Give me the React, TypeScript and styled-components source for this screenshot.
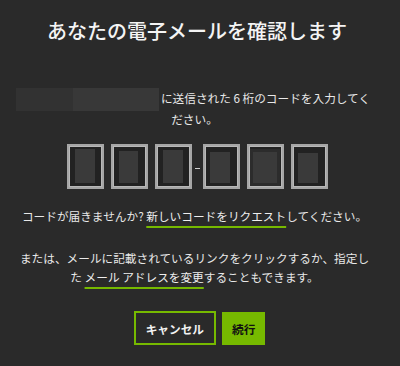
import React from "react";
import styled, { createGlobalStyle } from "styled-components";

const GlobalStyle = createGlobalStyle`
  html, body {
    margin: 0;
    padding: 0;
    background: #2a2a2a;
  }
  body {
    font-family: "Noto Sans CJK JP", "Noto Sans", sans-serif;
    color: #eeeeee;
  }
`;

const Dialog = styled.div`
  width: 400px;
  height: 366px;
  box-sizing: border-box;
  padding-top: 19px;
  display: flex;
  flex-direction: column;
  align-items: center;
`;

const Title = styled.h1`
  margin: 0;
  font-size: 20px;
  line-height: 24px;
  font-weight: 500;
  color: #f4f4f4;
  text-align: center;
  transform: translateX(-3px);
`;

const Content = styled.div`
  width: 356px;
  margin-left: -11px;
  display: flex;
  flex-direction: column;
  align-items: center;
`;

const Paragraph = styled.p<{ $top: number; $lh?: number }>`
  margin: ${(p) => p.$top}px 0 0;
  font-size: 11.67px;
  line-height: ${(p) => p.$lh ?? 20}px;
  text-align: center;
  color: #e8e8e8;
`;

const Redacted = styled.span`
  display: inline-flex;
  vertical-align: middle;
  height: 23px;
  margin: -2px 2px -2px -3px;
`;

const RedactedPart = styled.span<{ $w: number; $shade: string }>`
  display: block;
  width: ${(p) => p.$w}px;
  height: 100%;
  background: ${(p) => p.$shade};
`;

const CodeRow = styled.div`
  margin-top: 15px;
  display: flex;
  align-items: center;
  transform: translateX(3px);
`;

const CodeGroup = styled.div`
  display: flex;
  gap: 7px;
`;

const CodeBox = styled.div`
  width: 37px;
  height: 45px;
  box-sizing: border-box;
  border: 2px solid #a6a6a6;
  box-shadow: inset 0 0 0 1px #b8b8b8;
  background: #222222;
  position: relative;
`;

const Digit = styled.span<{ $l: number; $t: number; $w: number; $frame?: boolean }>`
  position: absolute;
  left: ${(p) => p.$l}px;
  top: ${(p) => p.$t}px;
  width: ${(p) => p.$w}px;
  bottom: 4px;
  background: #3a3a3a;
  box-shadow: ${(p) => (p.$frame ? "0 0 0 3px #2c2c2c" : "none")};
`;

const Dash = styled.span`
  width: 5px;
  height: 1px;
  background: #cfcfcf;
  margin: 0 3px;
  transform: translateY(2px);
`;

const Link = styled.a`
  color: #eeeeee;
  text-decoration: underline;
  text-decoration-color: #76b900;
  text-decoration-thickness: 2px;
  text-underline-offset: 5px;
`;

const Actions = styled.div`
  margin-top: 25px;
  display: flex;
  align-items: center;
  gap: 6px;
  transform: translateX(5px);
`;

const Button = styled.button<{ $primary?: boolean }>`
  font-family: "Noto Sans CJK JP", "Noto Sans", sans-serif;
  font-size: 11.67px;
  font-weight: 700;
  box-sizing: border-box;
  height: ${(p) => (p.$primary ? 33 : 34)}px;
  padding: 0 10px;
  border: ${(p) => (p.$primary ? "none" : "2px solid #76b900")};
  background: ${(p) => (p.$primary ? "#76b900" : "transparent")};
  color: ${(p) => (p.$primary ? "#111111" : "#f2f2f2")};
  border-radius: 0;
  cursor: pointer;
`;

const digits = [
  { l: 6, t: 3, w: 20 },
  { l: 6, t: 5, w: 19 },
  { l: 6, t: 4, w: 20 },
  { l: 5, t: 6, w: 20 },
  { l: 4, t: 6, w: 24, frame: true },
  { l: 5, t: 7, w: 20 },
];

export default function App() {
  return (
    <>
      <GlobalStyle />
      <Dialog>
        <Title>あなたの電子メールを確認します</Title>
        <Content>
          <Paragraph $top={45}>
            <Redacted>
              <RedactedPart $w={57} $shade="#323232" />
              <RedactedPart $w={86} $shade="#383838" />
            </Redacted>
            に送信された 6 桁のコードを入力してください。
          </Paragraph>
          <CodeRow>
            <CodeGroup>
              {digits.slice(0, 3).map((d, i) => (
                <CodeBox key={i}>
                  <Digit $l={d.l} $t={d.t} $w={d.w} $frame={d.frame} />
                </CodeBox>
              ))}
            </CodeGroup>
            <Dash />
            <CodeGroup>
              {digits.slice(3).map((d, i) => (
                <CodeBox key={i + 3}>
                  <Digit $l={d.l} $t={d.t} $w={d.w} $frame={d.frame} />
                </CodeBox>
              ))}
            </CodeGroup>
          </CodeRow>
          <Paragraph $top={17}>
            コードが届きませんか? <Link href="#">新しいコードをリクエスト</Link>してください。
          </Paragraph>
          <Paragraph $top={22} $lh={19}>
            または、メールに記載されているリンクをクリックするか、指定した{" "}
            <Link href="#">メール アドレスを変更</Link>することもできます。
          </Paragraph>
          <Actions>
            <Button>キャンセル</Button>
            <Button $primary>続行</Button>
          </Actions>
        </Content>
      </Dialog>
    </>
  );
}
